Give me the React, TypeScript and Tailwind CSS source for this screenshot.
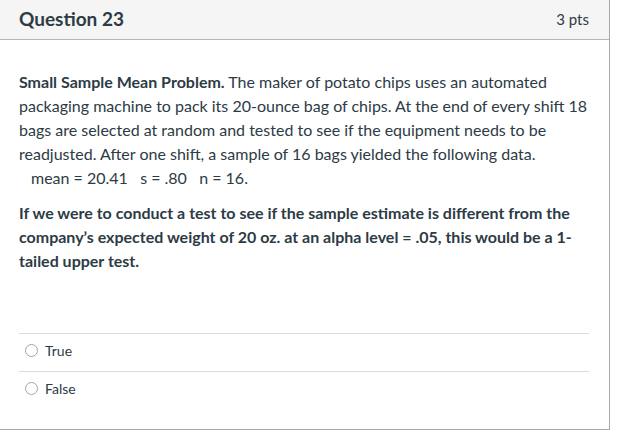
const font = { fontFamily: 'Lato, "Noto Sans", sans-serif' };

function Answer({ label }: { label: string }) {
  return (
    <div className="flex h-[38px] items-center border-t border-[#dcdcdc] pb-[4px] pl-[6px]">
      <span className="h-[13px] w-[13px] rounded-full border border-[#a5a5a5] bg-white" />
      <span className="ml-[7px] text-[14px] text-[#2d3b45]">{label}</span>
    </div>
  );
}

export default function App() {
  return (
    <div className="h-[438px] w-[628px] bg-white" style={font}>
      <div className="w-[610px] border-b border-r border-[#a9a9a9]">
        <div className="flex h-10 items-center justify-between border-b border-[#b5b5b5] bg-[#f5f5f5] pl-[19px] pr-[20px]">
          <span className="text-[19px] font-bold text-[#2d3b45]">Question 23</span>
          <span className="text-[15px] text-[#2d3b45]">3 pts</span>
        </div>
        <div className="pl-[19px] pr-[20px] pt-[30px] text-[16px] leading-6 text-[#2d3b45]">
          <p>
            <span className="font-bold">Small Sample Mean Problem.</span> The maker of potato chips uses an automated
            packaging machine to pack its 20-ounce bag of chips. At the end of every shift 18 bags are selected at
            random and tested to see if the equipment needs to be readjusted. After one shift, a sample of 16 bags
            yielded the following data.
          </p>
          <p className="whitespace-pre pl-3">mean = 20.41   s = .80   n = 16.</p>
          <p className="mt-[11px] font-bold">
            If we were to conduct a test to see if the sample estimate is different from the company’s expected weight
            of 20 oz. at an alpha level = .05, this would be a 1-tailed upper test.
          </p>
          <div className="mt-[60px] pb-[20px]">
            <Answer label="True" />
            <Answer label="False" />
          </div>
        </div>
      </div>
    </div>
  );
}
